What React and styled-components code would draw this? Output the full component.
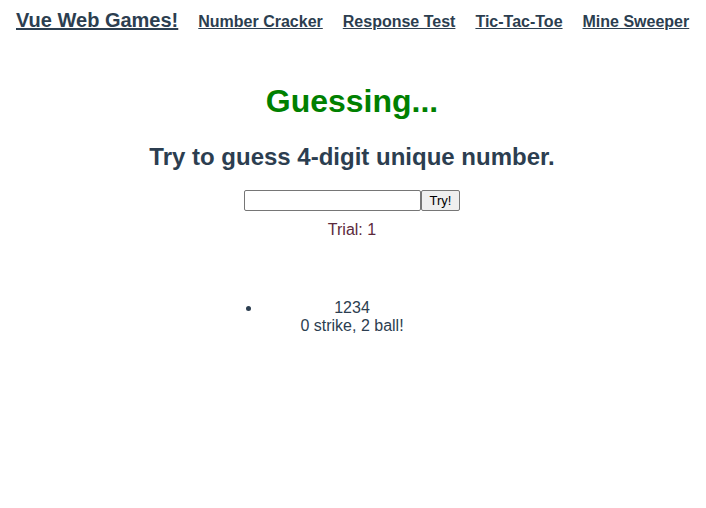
import React, { useState } from 'react'
import styled, { createGlobalStyle } from 'styled-components'

const GlobalStyle = createGlobalStyle`
body {
  margin: 8px;
  background: #fff;
  font-family: "Liberation Sans", Arial, sans-serif;
  color: #2c3e50;
}
`

const App = () => {
  const [value, setValue] = useState('')
  const history = [{ guess: '1234', result: '0 strike, 2 ball!' }]

  return (
    <React.Fragment>
      <GlobalStyle />
      <Nav>
        <Brand href="#">Vue Web Games!</Brand>
        <NavLink href="#">Number Cracker</NavLink>
        <NavLink href="#">Response Test</NavLink>
        <NavLink href="#">Tic-Tac-Toe</NavLink>
        <NavLink href="#">Mine Sweeper</NavLink>
      </Nav>

      <Main>
        <Title>Guessing...</Title>
        <Subtitle>Try to guess 4-digit unique number.</Subtitle>
        <Form onSubmit={e => e.preventDefault()}>
          <Input value={value} onChange={e => setValue(e.target.value)} />
          <Button type="submit">Try!</Button>
        </Form>
        <Trial>Trial: 1</Trial>
        <History>
          {history.map(item => (
            <Entry key={item.guess}>
              <div>{item.guess}</div>
              <div>{item.result}</div>
            </Entry>
          ))}
        </History>
      </Main>
    </React.Fragment>
  )
}

const Nav = styled.nav`
display: flex;
align-items: baseline;
gap: 20px;
padding: 1px 8px 3px 8px;
`

const Brand = styled.a`
font-size: 20px;
font-weight: bold;
color: #2c3e50;
text-decoration: underline;
`

const NavLink = styled.a`
font-size: 16px;
font-weight: bold;
color: #2c3e50;
text-decoration: underline;
`

const Main = styled.main`
text-align: center;
padding-right: 2px;
`

const Title = styled.h1`
margin: 48px 0 0 0;
font-size: 32px;
font-weight: bold;
color: #008000;
`

const Subtitle = styled.h2`
margin: 23px 0 0 0;
font-size: 24px;
font-weight: bold;
color: #2c3e50;
`

const Form = styled.form`
display: flex;
justify-content: center;
margin-top: 19px;
`

const Input = styled.input`
box-sizing: border-box;
width: 177px;
height: 21px;
border: 1px solid #767676;
border-radius: 2px;
padding: 1px 2px;
font-family: "Liberation Sans", Arial, sans-serif;
font-size: 13px;
`

const Button = styled.button`
box-sizing: border-box;
width: 39px;
height: 21px;
padding: 0;
border: 1px solid #767676;
border-radius: 2px;
background: #efefef;
color: #000;
font-family: "Liberation Sans", Arial, sans-serif;
font-size: 13px;
`

const Trial = styled.div`
margin-top: 10px;
font-size: 16px;
color: #5c2a3c;
`

const History = styled.ul`
width: 180px;
margin: 60px auto 0 auto;
padding: 0;
`

const Entry = styled.li`
font-size: 16px;
line-height: 18px;
color: #2c3e50;
`

export default App
